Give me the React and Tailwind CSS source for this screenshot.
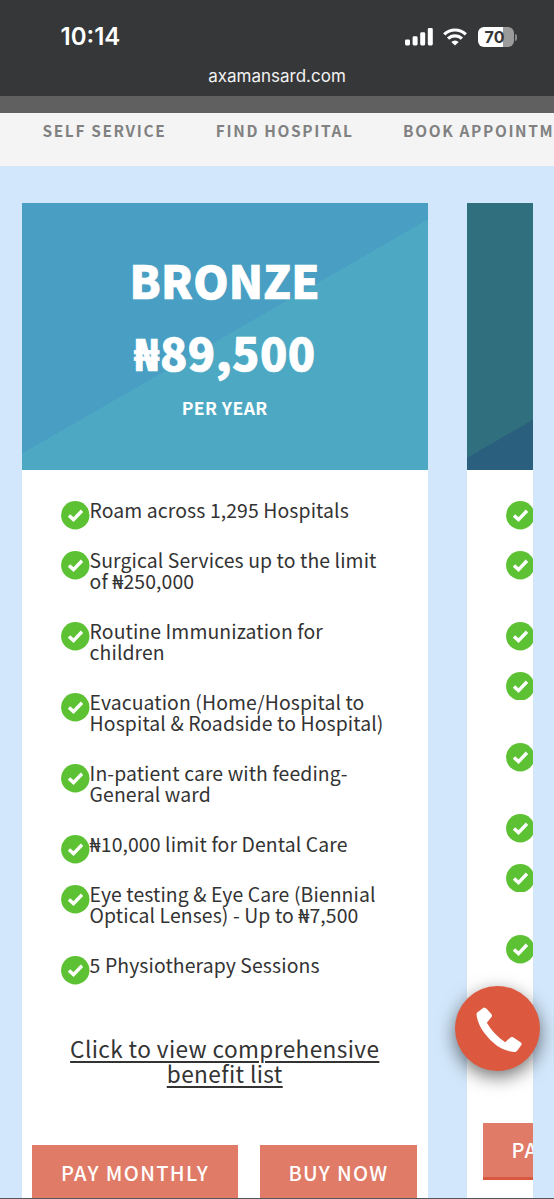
const BRONZE_FEATURES = [
  ['Roam across 1,295 Hospitals'],
  ['Surgical Services up to the limit', 'of ₦250,000'],
  ['Routine Immunization for', 'children'],
  ['Evacuation (Home/Hospital to', 'Hospital & Roadside to Hospital)'],
  ['In-patient care with feeding-', 'General ward'],
  ['₦10,000 limit for Dental Care'],
  ['Eye testing & Eye Care (Biennial', 'Optical Lenses) - Up to ₦7,500'],
  ['5 Physiotherapy Sessions'],
];

// only the bullets of the next plan are on screen, so it keeps line counts
const NEXT_PLAN_ROWS = [1, 2, 1, 2, 2, 1, 2, 1];

function SignalIcon() {
  return (
    <svg width="28" height="18" viewBox="0 0 28 18" fill="#fff">
      <rect x="0" y="11.5" width="5" height="6" rx="1.4" />
      <rect x="7.6" y="8.3" width="5" height="9.2" rx="1.4" />
      <rect x="15.2" y="4.3" width="5" height="13.2" rx="1.4" />
      <rect x="22.8" y="0" width="5" height="17.5" rx="1.4" />
    </svg>
  );
}

function WifiIcon() {
  return (
    <svg width="24" height="18" viewBox="0 0 24 18" fill="none" stroke="#fff" strokeWidth="3.2">
      <path d="M1.2 6.4a15.4 15.4 0 0 1 21.6 0" />
      <path d="M5.1 10.7a9.7 9.7 0 0 1 13.8 0" />
      <path d="M12 17.6l-3.7-3.7a5.3 5.3 0 0 1 7.4 0z" fill="#fff" stroke="none" />
    </svg>
  );
}

function Battery() {
  return (
    <div className="flex items-center gap-px">
      <div className="flex h-5 w-9 items-center justify-center rounded-[6px] bg-[linear-gradient(90deg,#fff_70%,#9b9b9c_70%)] pr-0.5 font-['Inter',sans-serif] text-[16px] font-bold leading-5 text-[#363739]">
        70
      </div>
      <div className="h-[7px] w-[2px] rounded-r-full bg-[#8a8a8b]" />
    </div>
  );
}

function StatusBar() {
  return (
    <header className="h-24 bg-[#363739] font-['Inter',sans-serif] text-white">
      <div className="flex h-[74px] items-center justify-between pl-[60.5px] pr-[37.5px]">
        <span className="text-[24px] font-semibold leading-none">10:14</span>
        <div className="flex items-center gap-[10.5px]">
          <SignalIcon />
          <WifiIcon />
          <Battery />
        </div>
      </div>
      <p className="-mt-[9px] text-center text-[17px] leading-[22px] text-[#f2f2f2]">axamansard.com</p>
    </header>
  );
}

function Nav() {
  return (
    <nav className="flex h-[53px] gap-[49.5px] overflow-hidden whitespace-nowrap bg-[#f4f4f4] pl-[42.5px] pt-[6px] text-[15.4px] font-bold leading-[22px] tracking-[1.65px] text-[#818181]">
      <span>SELF SERVICE</span>
      <span>FIND HOSPITAL</span>
      <span>BOOK APPOINTMENT</span>
    </nav>
  );
}

function CheckBullet() {
  return (
    <svg className="h-[28.6px] w-[28.6px] shrink-0" viewBox="0 0 28.6 28.6">
      <circle cx="14.3" cy="14.3" r="14.2" fill="#5dc233" />
      <path d="M8 14.4l4.5 4.2 8.5-8.8" fill="none" stroke="#fff" strokeWidth="3.4" />
    </svg>
  );
}

function FeatureRow({ lines, count = lines.length }) {
  return (
    <li className={`flex ${count > 1 ? 'h-[71.1px]' : 'h-[49.8px]'}`}>
      <div className="pt-[2.2px]">
        <CheckBullet />
      </div>
      {lines && (
        <div className="whitespace-nowrap">
          {lines.map((line) => (
            <div key={line} className="h-[21.3px]">{line}</div>
          ))}
        </div>
      )}
    </li>
  );
}

function BronzePlan() {
  return (
    <section className="w-[406.5px] shrink-0 bg-white">
      <div className="flex h-[266.5px] flex-col items-center bg-[linear-gradient(150deg,#489fc3_50%,#4da9c3_50%)] pt-[41px] font-bold text-white">
        <h2 className="h-[72px] text-[45px] font-black leading-[72px] tracking-[0.2px] [-webkit-text-stroke:0.7px_#fff]">BRONZE</h2>
        <p className="h-[73px] text-[45px] font-black leading-[72px] tracking-[0.5px] [-webkit-text-stroke:0.7px_#fff]">₦89,500</p>
        <p className="text-[17.6px] leading-[38px] tracking-[0.4px]">PER YEAR</p>
      </div>
      <ul className="h-[535px] pl-[39.5px] pt-[29.5px] text-[19.4px] leading-[21.3px] tracking-[0.1px] text-[#333]">
        {BRONZE_FEATURES.map((lines) => (
          <FeatureRow key={lines[0]} lines={lines} />
        ))}
      </ul>
      <p className="h-[140.5px] pt-[31px] text-center text-[22.6px] leading-[25.5px] tracking-[0.4px] text-[#333] underline decoration-[1.5px] underline-offset-[3px]">
        Click to view comprehensive
        <br />
        benefit list
      </p>
      <div className="flex gap-[22px] pl-[10.5px] text-[20px] font-medium leading-[55px] tracking-[1.35px] text-white">
        <button className="h-[57px] w-[206px] bg-[#e07b67] pb-1">PAY MONTHLY</button>
        <button className="h-[57px] w-[157px] bg-[#e07b67] pb-1">BUY NOW</button>
      </div>
    </section>
  );
}

function NextPlan() {
  return (
    <section className="w-[406.5px] shrink-0 bg-white">
      <div className="h-[266.5px] bg-[linear-gradient(150deg,#30707e_50.8%,#2a5f7d_50.8%)]" />
      <ul className="h-[653.5px] pl-[39.5px] pt-[29.5px]">
        {NEXT_PLAN_ROWS.map((count, i) => (
          <FeatureRow key={i} count={count} />
        ))}
      </ul>
      <button className="ml-4 h-[57px] w-[206px] border-b-[3px] border-[#d9583f] bg-[#e07b67] text-[20px] font-medium leading-[54px] tracking-[1.35px] text-white">
        PAY MONTHLY
      </button>
    </section>
  );
}

function CallButton() {
  return (
    <button className="absolute left-[454.5px] top-[986px] h-[85px] w-[85px] rounded-full bg-[#dc593f] shadow-[0_6px_18px_rgba(0,0,0,0.55)]">
      <svg className="h-full w-full" viewBox="1.5 18 255 255" fill="#fff">
        <path d="M90 83Q94 83 97 87L111 103Q114 107 111 111L97 128Q115 160 152 187L167 173Q171 170 176 172L198 187Q203 190 201 194L188 212Q184 217 178 216Q130 213 90 160Q68 130 66 102Q66 99 69 97L86 84Q88 82 90 83Z" />
      </svg>
    </button>
  );
}

export default function App() {
  return (
    <div className="relative h-[1199px] w-[554px] overflow-hidden bg-[#d2e7fb] font-['Noto_Sans_CJK_SC','Noto_Sans',sans-serif]">
      <StatusBar />
      <div className="h-[17px] bg-[#606060]" />
      <Nav />
      <main className="mx-[21.5px] mt-[37px] flex h-[995px] gap-[38.5px] overflow-hidden">
        <BronzePlan />
        <NextPlan />
      </main>
      <div className="h-px bg-[#55565a]" />
      <CallButton />
    </div>
  );
}
